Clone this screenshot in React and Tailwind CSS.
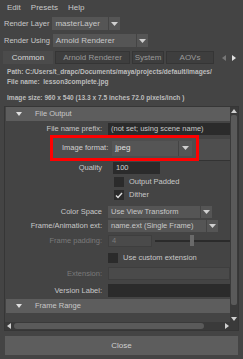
import React from 'react';

const font = { fontFamily: '"Liberation Sans", Arial, sans-serif' };

function Arrow({ className = '' }) {
    return (
        <svg width="7" height="4" viewBox="0 0 7 4" className={className}>
            <path d="M0 0 L7 0 L3.5 4 Z" fill="#d0d0d0" />
        </svg>
    );
}

function Dropdown({ value, className = '', arrowW = 'w-[12px]' }) {
    return (
        <div className={`flex h-full bg-[#555555] ${className}`}>
            <div className="flex-1 flex items-center pl-[3px] truncate">{value}</div>
            <div className={`${arrowW} flex items-center justify-center border-l border-[#444444]`}>
                <Arrow />
            </div>
        </div>
    );
}

function Row({ label, dim, children, h = 'h-[12px]', mt = 'mt-[2px]' }) {
    return (
        <div className={`flex ${h} ${mt} items-stretch`}>
            <div className={`w-[96px] shrink-0 text-right flex items-center justify-end whitespace-nowrap ${dim ? 'text-[#7a7a7a]' : ''}`}>{label}</div>
            <div className="w-[6px] shrink-0" />
            {children}
        </div>
    );
}

function Check({ checked }) {
    return (
        <div className="w-[10px] h-[10px] bg-[#2b2b2b] flex items-center justify-center">
            {checked && (
                <svg width="8" height="7" viewBox="0 0 8 7">
                    <path d="M1 3.5 L3 5.5 L7 1" stroke="#e0e0e0" strokeWidth="1.4" fill="none" />
                </svg>
            )}
        </div>
    );
}

function Header({ title }) {
    return (
        <div className="h-[14px] bg-[#5d5d5d] flex items-center">
            <svg width="6" height="4" viewBox="0 0 6 4" className="ml-[10px]">
                <path d="M0 0 L6 0 L3 4 Z" fill="#e0e0e0" />
            </svg>
            <span className="ml-[13px]">{title}</span>
        </div>
    );
}

export default function App() {
    return (
        <div style={font} className="w-[243px] h-[359px] bg-[#444444] text-[#c8c8c8] text-[7.5px] overflow-hidden flex flex-col">
            {/* menu bar */}
            <div className="h-[16px] flex items-center pl-[7px] gap-[10px] text-[8px]">
                <span>Edit</span>
                <span>Presets</span>
                <span>Help</span>
            </div>

            {/* render layer / render using */}
            <div className="flex items-center h-[13px] mt-[1px] text-[7.5px] whitespace-nowrap">
                <span className="ml-[4px] shrink-0">Render Layer</span>
                <Dropdown value={<span className="text-[8px]">masterLayer</span>} className="ml-[3px] w-[68px]" />
            </div>
            <div className="flex items-center h-[13px] mt-[4px] text-[7.5px] whitespace-nowrap">
                <span className="ml-[4px] shrink-0">Render Using</span>
                <Dropdown value={<span className="text-[8px]">Arnold Renderer</span>} className="ml-[3px] w-[95px]" />
            </div>

            {/* tabs */}
            <div className="flex h-[13px] mt-[4px] ml-[3px] items-stretch text-[8px] whitespace-nowrap">
                <div className="w-[50px] bg-[#4b4b4b] flex items-center justify-center text-[#d8d8d8]">Common</div>
                <div className="w-[75px] ml-[2px] bg-[#3e3e3e] border border-[#353535] flex items-center justify-center text-[#9a9a9a]">Arnold Renderer</div>
                <div className="w-[32px] ml-[2px] bg-[#3e3e3e] border border-[#353535] flex items-center justify-center text-[#9a9a9a]">System</div>
                <div className="w-[48px] ml-[2px] bg-[#3e3e3e] border border-[#353535] flex items-center justify-center text-[#9a9a9a]">AOVs</div>
                <div className="flex items-center ml-[8px] gap-[6px]">
                    <svg width="4" height="6" viewBox="0 0 4 6"><path d="M4 0 L4 6 L0 3 Z" fill="#777777" /></svg>
                    <svg width="4" height="6" viewBox="0 0 4 6"><path d="M0 0 L0 6 L4 3 Z" fill="#e0e0e0" /></svg>
                </div>
            </div>

            {/* info */}
            <div className="pl-[7px] pt-[3px] text-[6.6px] font-bold text-[#bdbdbd] leading-[10px] whitespace-nowrap">
                <div>Path: C:/Users/t_drapc/Documents/maya/projects/default/images/</div>
                <div>File name:&nbsp; lesson3complete.jpg</div>
                <div className="mt-[6px]">Image size: 960 x 540 (13.3 x 7.5 inches 72.0 pixels/inch )</div>
            </div>

            {/* scroll panel */}
            <div className="mx-[4px] mt-[3px] h-[225px] border border-[#363636] flex flex-col">
                <div className="flex flex-1 min-h-0">
                    <div className="flex-1 overflow-hidden pl-[1px]">
                        <Header title="File Output" />
                        <Row label="File name prefix:" mt="mt-[2px]">
                            <div className="flex-1 bg-[#2b2b2b] flex items-center pl-[3px] whitespace-nowrap">(not set; using scene name)</div>
                        </Row>

                        {/* image format highlighted */}
                        <div className="flex h-[26px] items-stretch">
                            <div className="w-[44px] shrink-0" />
                            <div className="w-[149px] border-[3px] border-[#ff0000] bg-[#4e4e4e] flex items-center pl-[9px] pr-[4px] whitespace-nowrap">
                                <span className="text-[#d0d0d0]">Image format:</span>
                                <Dropdown value={<span className="text-[8px] text-[#e0e0e0]">jpeg</span>} className="ml-[4px] flex-1 !h-[15px] bg-[#4a4a4a]" arrowW="w-[14px]" />
                            </div>
                            <div className="flex-1 bg-[#4e4e4e] mt-[4px] border-b border-[#333333]" />
                        </div>

                        <Row label="Quality" mt="mt-[1px]">
                            <div className="w-[5px]" />
                            <div className="w-[47px] bg-[#2b2b2b] flex items-center pl-[3px] text-[#d0d0d0]">100</div>
                        </Row>
                        <div className="flex items-center h-[10px] mt-[3px] pl-[108px] gap-[5px]">
                            <Check />
                            <span>Output Padded</span>
                        </div>
                        <div className="flex items-center h-[10px] mt-[3px] pl-[108px] gap-[5px]">
                            <Check checked />
                            <span>Dither</span>
                        </div>
                        <Row label="Color Space" mt="mt-[6px]">
                            <Dropdown value="Use View Transform" className="w-[104px]" />
                        </Row>
                        <Row label="Frame/Animation ext:" mt="mt-[2px]">
                            <Dropdown value="name.ext (Single Frame)" className="w-[110px]" />
                        </Row>
                        <Row label="Frame padding:" dim mt="mt-[3px]">
                            <div className="w-[44px] bg-[#4a4a4a] border border-[#3e3e3e] flex items-center pl-[3px] text-[#7a7a7a]">4</div>
                            <div className="flex-1 ml-[3px] relative flex items-center">
                                <div className="w-full h-[2px] bg-[#2b2b2b]" />
                                <div className="absolute left-[35px] top-[0px] w-[4px] h-[11px] bg-[#6a6a6a]" />
                            </div>
                        </Row>
                        <div className="flex items-center h-[10px] mt-[6px] pl-[102px] gap-[5px]">
                            <Check />
                            <span>Use custom extension</span>
                        </div>
                        <Row label="Extension:" dim h="h-[13px]" mt="mt-[4px]">
                            <div className="flex-1 bg-[#4a4a4a] border border-[#3e3e3e]" />
                        </Row>
                        <Row label="Version Label:" h="h-[13px]" mt="mt-[4px]">
                            <div className="flex-1 bg-[#2b2b2b]" />
                        </Row>
                        <div className="mt-[2px]">
                            <Header title="Frame Range" />
                        </div>
                    </div>
                    {/* vertical scrollbar */}
                    <div className="w-[8px] flex flex-col items-center bg-[#3a3a3a]">
                        <svg width="6" height="4" viewBox="0 0 6 4" className="mt-[2px]"><path d="M0 4 L6 4 L3 0 Z" fill="#d0d0d0" /></svg>
                        <div className="w-[6px] h-[190px] mt-[2px] bg-[#5a5a5a] rounded-[2px]" />
                        <div className="flex-1" />
                        <svg width="6" height="4" viewBox="0 0 6 4" className="mb-[1px]"><path d="M0 0 L6 0 L3 4 Z" fill="#d0d0d0" /></svg>
                    </div>
                </div>
                {/* horizontal scrollbar */}
                <div className="h-[8px] flex items-center bg-[#3a3a3a] pr-[9px]">
                    <svg width="4" height="6" viewBox="0 0 4 6" className="ml-[2px]"><path d="M4 0 L4 6 L0 3 Z" fill="#d0d0d0" /></svg>
                    <div className="w-[190px] h-[6px] ml-[3px] bg-[#5a5a5a] rounded-[3px]" />
                    <div className="flex-1" />
                    <svg width="4" height="6" viewBox="0 0 4 6"><path d="M0 0 L0 6 L4 3 Z" fill="#d0d0d0" /></svg>
                </div>
            </div>

            {/* close */}
            <div className="mx-[5px] mt-[5px] h-[19px] bg-[#5d5d5d] flex items-center justify-center text-[8px] text-[#d0d0d0]">Close</div>
        </div>
    );
}
